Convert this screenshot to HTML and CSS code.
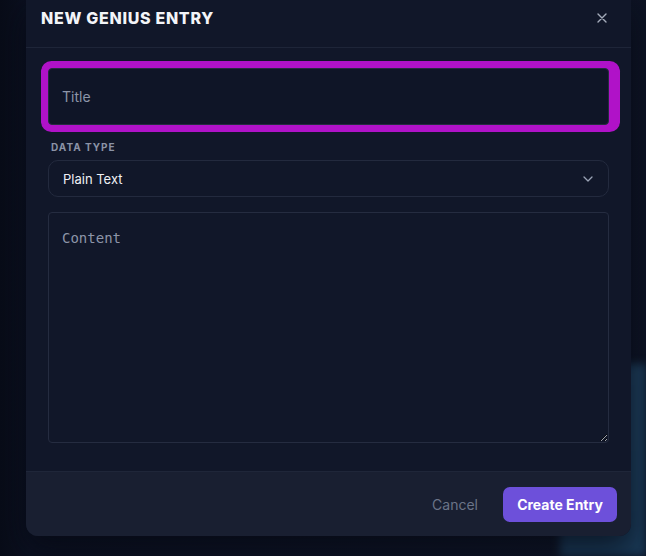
FILE: index.html
```html
<!DOCTYPE html>
<html>
<head>
    <link rel="stylesheet" href="styles.css">
</head>
<body>
<div class="glow"></div>
<div class="backdrop">
    <div class="modal">
        <div class="modal-header">
            <h2 class="modal-title">NEW GENIUS ENTRY</h2>
            <svg class="close" width="10" height="10" viewBox="0 0 10 10">
                <path d="M1 1 L9 9 M9 1 L1 9" stroke="#a5acbb" stroke-width="1.4" stroke-linecap="round"/>
            </svg>
        </div>

        <div class="modal-body">
            <input class="field title-field" type="text" placeholder="Title">

            <label class="label">DATA TYPE</label>
            <div class="select">
                <span>Plain Text</span>
                <svg class="chevron" width="10" height="6" viewBox="0 0 10 6">
                    <path d="M1 1 L5 5 L9 1" fill="none" stroke="#9aa3b5" stroke-width="1.3" stroke-linecap="round" stroke-linejoin="round"/>
                </svg>
            </div>

            <textarea class="field content-field" placeholder="Content"></textarea>
        </div>

        <div class="modal-footer">
            <span class="cancel">Cancel</span>
            <button class="create">Create Entry</button>
        </div>
    </div>
</div>
</body>
</html>
```

FILE: styles.css
```css
html, body {
    margin: 0;
    padding: 0;
    height: 100%;
}

body {
    font-family: Inter, "Noto Sans", Arial, sans-serif;
    background-color: #0b1020;
    background-image: linear-gradient(to right, #080c18 0px, #0b1020 30px, #0e1425 600px, #0d1323 646px);
    overflow: hidden;
    position: relative;
}

/* blurred blue panel peeking out behind the modal */
.glow {
    position: absolute;
    left: 560px;
    top: 364px;
    width: 86px;
    height: 192px;
    background: linear-gradient(to bottom, #1d3d5a, #1a3a57);
    filter: blur(4px);
}

.backdrop {
    position: relative;
    padding-left: 26px;
    width: 605px;
}

.modal {
    background: #111729;
    border-radius: 0 0 12px 12px;
    box-shadow: 0 12px 30px rgba(5, 8, 18, 0.7);
    overflow: hidden;
}

/* header */
.modal-header {
    height: 48px;
    box-sizing: border-box;
    padding: 6px 24px 0 15px;
    display: flex;
    justify-content: space-between;
    align-items: flex-start;
    border-bottom: 1px solid #1e2538;
}

.modal-title {
    margin: 0;
    font-size: 16px;
    line-height: 24px;
    font-weight: 800;
    letter-spacing: 0.7px;
    color: #f3f4f8;
}

.close {
    margin-top: 7px;
}

/* body */
.modal-body {
    padding: 20px 22px 28px 22px;
    display: flex;
    flex-direction: column;
}

.field {
    box-sizing: border-box;
    width: 100%;
    background: #0f1527;
    border: 1px solid #252c40;
    color: #e5e7eb;
    outline: none;
    margin: 0;
}

.title-field {
    height: 57px;
    padding: 0 13px;
    font-family: Inter, "Noto Sans", Arial, sans-serif;
    font-size: 14px;
    border-radius: 4px;
    box-shadow: -7px 0 0 0 #b012c8, 0 0 0 7px #b012c8, 11px 0 0 0 #b012c8, 4px 0 0 7px #b012c8;
}

.title-field::placeholder {
    color: #8d95a8;
}

.label {
    margin-top: 15px;
    margin-left: 3px;
    font-size: 10px;
    line-height: 14px;
    font-weight: 700;
    letter-spacing: 1px;
    color: #8b93a6;
}

.select {
    margin-top: 6px;
    height: 37px;
    box-sizing: border-box;
    padding: 0 15px 0 14px;
    border: 1px solid #232a3e;
    border-radius: 10px;
    background: #111729;
    display: flex;
    justify-content: space-between;
    align-items: center;
    font-size: 13px;
    color: #eef0f4;
}

.content-field {
    margin-top: 15px;
    height: 231px;
    padding: 16px 13px;
    border-radius: 4px;
    resize: vertical;
    background: #111729;
    font-family: "DejaVu Sans Mono", "Liberation Mono", monospace;
    font-size: 14px;
    line-height: 18px;
}

.content-field::placeholder {
    color: #8d95a8;
}

/* footer */
.modal-footer {
    height: 65px;
    box-sizing: border-box;
    padding: 0 14px;
    border-top: 1px solid #1f2639;
    background: #191f31;
    display: flex;
    justify-content: flex-end;
    align-items: center;
}

.cancel {
    font-size: 14px;
    color: #6b7488;
    margin-right: 25px;
}

.create {
    height: 35px;
    width: 114px;
    border: none;
    border-radius: 7px;
    background: #6d50da;
    color: #ffffff;
    font-family: Inter, "Noto Sans", Arial, sans-serif;
    font-size: 14px;
    font-weight: 700;
}
```
